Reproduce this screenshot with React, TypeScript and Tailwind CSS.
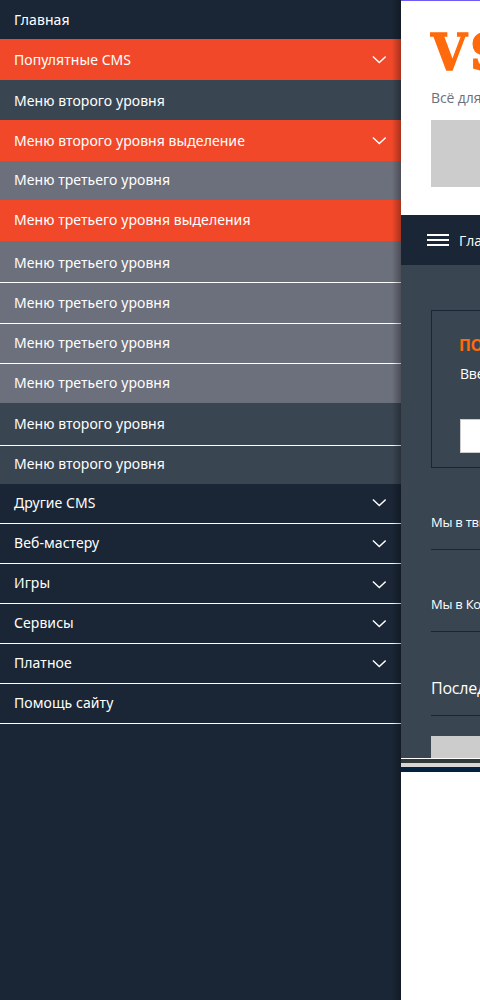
type Item = { label: string; row: string; chevron?: string };

const items: Item[] = [
  { label: 'Главная', row: 'h-[39px] pt-[10px] bg-[#1a2635]' },
  { label: 'Популятные CMS', row: 'h-[41px] pt-[11px] bg-[#f04829]', chevron: 'mt-[6px]' },
  { label: 'Меню второго уровня', row: 'h-[40px] pt-[11px] bg-[#3a4552]' },
  { label: 'Меню второго уровня выделение', row: 'h-[41px] pt-[11px] bg-[#f04829]', chevron: 'mt-[6px]' },
  { label: 'Меню третьего уровня', row: 'h-[39px] pt-[9px] bg-[#6c707c]' },
  { label: 'Меню третьего уровня выделения', row: 'h-[41px] pt-[10px] bg-[#f04829]' },
  { label: 'Меню третьего уровня', row: 'h-[42px] pt-[12px] bg-[#6c707c] border-b border-white' },
  { label: 'Меню третьего уровня', row: 'h-[41px] pt-[10px] bg-[#6c707c] border-b border-white' },
  { label: 'Меню третьего уровня', row: 'h-[40px] pt-[9px] bg-[#6c707c] border-b border-white' },
  { label: 'Меню третьего уровня', row: 'h-[39px] pt-[9px] bg-[#6c707c]' },
  { label: 'Меню второго уровня', row: 'h-[43px] pt-[11px] bg-[#3a4552] border-b border-white' },
  { label: 'Меню второго уровня', row: 'h-[38px] pt-[8px] bg-[#3a4552]' },
  { label: 'Другие CMS', row: 'h-[40px] pt-[9px] border-b border-white', chevron: 'mt-[6px]' },
  { label: 'Веб-мастеру', row: 'h-[40px] pt-[9px] border-b border-white', chevron: 'mt-[7px]' },
  { label: 'Игры', row: 'h-[40px] pt-[9px] border-b border-white', chevron: 'mt-[8px]' },
  { label: 'Сервисы', row: 'h-[40px] pt-[9px] border-b border-white', chevron: 'mt-[7px]' },
  { label: 'Платное', row: 'h-[40px] pt-[9px] border-b border-white', chevron: 'mt-[7px]' },
  { label: 'Помощь сайту', row: 'h-[40px] pt-[9px] border-b border-white' },
];

function Chevron({ className }: { className: string }) {
  return (
    <svg className={className} width="14" height="8" viewBox="0 0 14 8" fill="none" stroke="#fff" strokeWidth="1.4">
      <path d="M0.9 0.6 L7.3 6.6 L13.7 0.6" />
    </svg>
  );
}

function Sidebar() {
  return (
    <nav className="relative h-full w-[401px] shrink-0 bg-[#1a2635]">
      {items.map((item, i) => (
        <a key={i} className={`flex items-start justify-between pl-[14px] pr-[15px] text-[14px] leading-[20px] tracking-[0.07px] text-white ${item.row}`}>
          <span>{item.label}</span>
          {item.chevron && <Chevron className={item.chevron} />}
        </a>
      ))}
      <div className="absolute inset-y-0 right-0 w-[9px] bg-gradient-to-r from-transparent to-black/30" />
    </nav>
  );
}

function Page() {
  return (
    <main className="flex h-full w-[350px] shrink-0 flex-col bg-white font-['Open_Sans','Noto_Sans',sans-serif] whitespace-nowrap">
      <header className="h-[215px] shrink-0 border-t border-[#6c5cf0] pl-[30px]">
        <div className="mt-[22px] flex h-[60px] font-['DejaVu_Serif',serif] text-[50px] leading-[60px] font-bold text-[#ff6a0c] [-webkit-text-stroke:1.5px_#ff6a0c]">
          <span className="w-[39px] origin-left scale-x-[0.93]">V</span>
          <span>S</span>
        </div>
        <div className="mt-[5px] text-[14px] leading-[20px] tracking-[-0.1px] text-[#6c707c]">Всё для сайта</div>
        <div className="mt-[12px] h-[67px] bg-[#cccccc]" />
      </header>
      <div className="flex h-[50px] shrink-0 items-center bg-[#1a2635] pl-[26px] text-white">
        <div className="flex w-[22px] flex-col gap-[3px]">
          <i className="h-[2px] bg-white" />
          <i className="h-[2px] bg-white" />
          <i className="h-[2px] bg-white" />
        </div>
        <span className="ml-[10px] pt-[2px] text-[14px] leading-[20px]">Главная</span>
      </div>
      <section className="h-[493px] shrink-0 overflow-hidden bg-[#3a4552] pt-[45px] pl-[30px] text-white">
        <div className="h-[158px] border border-[#1a2635] pt-[23px] pl-[28px]">
          <div className="-ml-px text-[16px] leading-[22px] font-bold tracking-[-0.3px] text-[#ff6a0c]">ПОДПИСКА</div>
          <div className="mt-[8px] text-[14px] leading-[20px] tracking-[-0.2px]">Введите</div>
          <div className="mt-[35px] h-[34px] border border-[#cccccc] bg-white" />
        </div>
        <div className="h-[82px] border-b border-[#1a2635] pt-[44px] text-[13px] leading-[20px] tracking-[-0.25px]">Мы в твиттере</div>
        <div className="h-[82px] border-b border-[#1a2635] pt-[44px] text-[13px] leading-[20px] tracking-[-0.25px]">Мы в Контакте</div>
        <div className="h-[84px] border-b border-[#1a2635] pt-[44px] text-[16px] leading-[24px] tracking-[-0.2px]">Последние</div>
        <div className="mt-[20px] h-[22px] bg-[#cccccc]" />
      </section>
      <div className="h-px shrink-0 bg-white" />
      <div className="h-[4px] shrink-0 bg-[#303938]" />
      <div className="h-[4px] shrink-0 bg-[#d9d5d5]" />
      <div className="h-[5px] shrink-0 bg-[#03213c]" />
    </main>
  );
}

export default function App() {
  return (
    <div className="flex h-[1000px] w-[480px] overflow-hidden font-['Noto_Sans',sans-serif]">
      <Sidebar />
      <Page />
    </div>
  );
}
